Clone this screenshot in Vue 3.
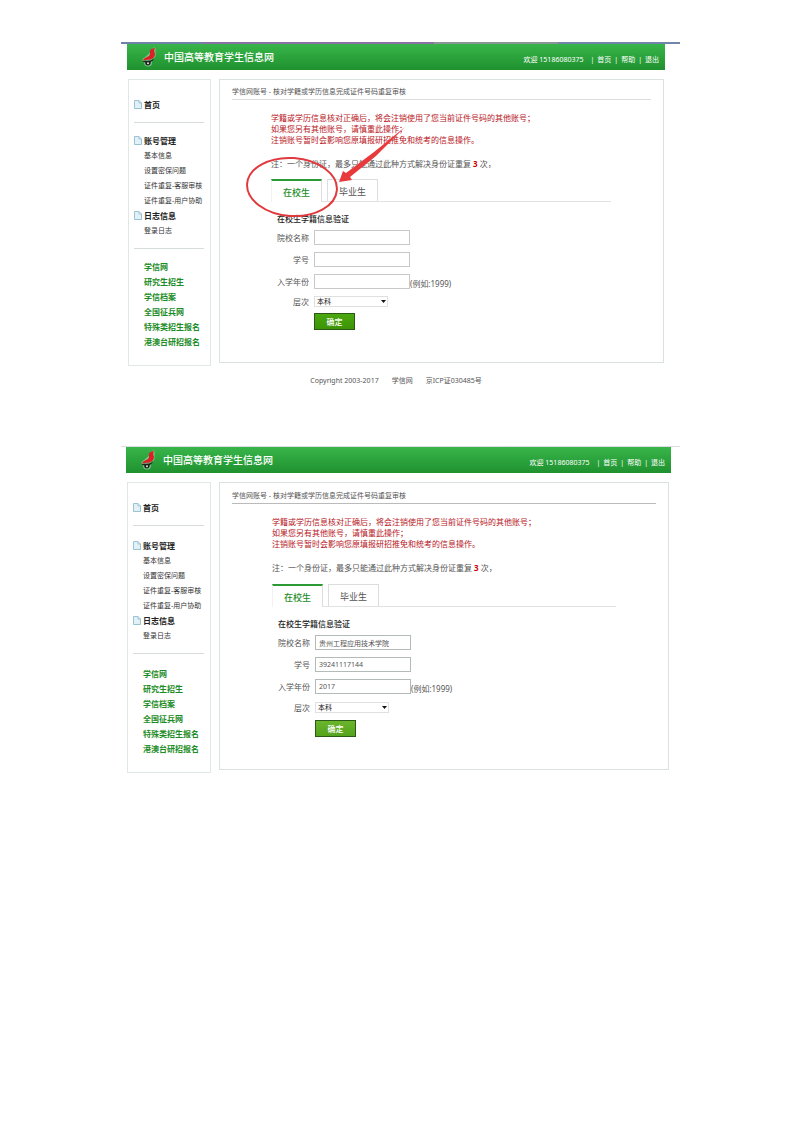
<script setup>
import { ref } from 'vue';

const accountItems = ['基本信息', '设置密保问题', '证件重复-客服审核', '证件重复-用户协助'];
const siteLinks = ['学信网', '研究生招生', '学信档案', '全国征兵网', '特殊类招生报名', '港澳台研招报名'];
const tabs = ['在校生', '毕业生'];
const levels = ['本科', '专科', '硕士', '博士'];

const screens = ref([
  {
    id: 'empty',
    tab: '在校生',
    school: '',
    number: '',
    year: '',
    level: '本科',
    marked: true,
    footer: true,
  },
  {
    id: 'filled',
    tab: '在校生',
    school: '贵州工程应用技术学院',
    number: '39241117144',
    year: '2017',
    level: '本科',
    marked: false,
    footer: false,
  },
]);
</script>

<template>
  <main class="page" lang="zh-CN">
    <section v-for="screen in screens" :key="screen.id" class="screen" :class="screen.id">
      <header class="top-bar">
        <svg class="logo" viewBox="0 0 16 20" aria-hidden="true">
          <g class="logo-glow">
            <path d="M13 2 L13 9 L9 12 L3 13 L9 8 Z" />
            <circle cx="7" cy="15.500" r="2.500" />
          </g>
          <path class="logo-red" d="M14 1 C10.500 1.500 8.500 3 9 5.500 C9.300 7.500 8.500 9 6 10 C4 10.800 2.500 12 1.500 14 C4 12.800 6 13 8 12.800 C12 12.300 14.500 9.500 13.800 6.500 C13.400 4.500 12.800 3 14 1 Z" />
          <path class="logo-black" d="M1.500 14.500 C5 13.200 9 14.500 13 11.800 C12 14 10.500 14.300 9.800 15 C9.800 17.500 8.500 18.500 6.800 18.500 C5 18.500 4 17.500 4.300 15.500 Z" />
          <circle class="logo-dot" cx="7" cy="16.300" r="1" />
        </svg>
        <h1>中国高等教育学生信息网</h1>
        <nav class="user-nav">
          <span class="welcome">欢迎 15186080375</span>
          <span>|</span><a href="#">首页</a>
          <span>|</span><a href="#">帮助</a>
          <span>|</span><a href="#">退出</a>
        </nav>
      </header>

      <div class="columns">
        <aside class="sidebar">
          <a href="#" class="menu-title">
            <svg class="doc" viewBox="0 0 8 9" aria-hidden="true"><path d="M.5.5h4.500l2.500 2.500v5.500h-7zM5 .5v2.500h2.500" /></svg>
            首页
          </a>
          <hr>
          <a href="#" class="menu-title">
            <svg class="doc" viewBox="0 0 8 9" aria-hidden="true"><path d="M.5.5h4.500l2.500 2.500v5.500h-7zM5 .5v2.500h2.500" /></svg>
            账号管理
          </a>
          <a v-for="item in accountItems" :key="item" href="#" class="menu-item">{{ item }}</a>
          <a href="#" class="menu-title">
            <svg class="doc" viewBox="0 0 8 9" aria-hidden="true"><path d="M.5.5h4.500l2.500 2.500v5.500h-7zM5 .5v2.500h2.500" /></svg>
            日志信息
          </a>
          <a href="#" class="menu-item">登录日志</a>
          <hr>
          <a v-for="link in siteLinks" :key="link" href="#" class="site-link">{{ link }}</a>
        </aside>

        <article class="content">
          <p class="breadcrumb">学信网账号 - 核对学籍或学历信息完成证件号码重复审核</p>
          <div class="verify">
            <p class="warning">
              学籍或学历信息核对正确后，将会注销使用了您当前证件号码的其他账号；<br>
              如果您另有其他账号，请慎重此操作；<br>
              注销账号暂时会影响您原填报研招推免和统考的信息操作。
            </p>
            <p class="note">注：一个身份证，最多只能通过此种方式解决身份证重复 <strong>3</strong> 次，</p>

            <div class="tabs">
              <button
                v-for="tab in tabs"
                :key="tab"
                type="button"
                class="tab"
                :class="{ active: screen.tab === tab }"
                @click="screen.tab = tab"
              >{{ tab }}</button>
            </div>

            <form class="form" @submit.prevent>
              <h2>{{ screen.tab }}学籍信息验证</h2>
              <div class="row">
                <label :for="screen.id + '-school'">院校名称</label>
                <input :id="screen.id + '-school'" v-model="screen.school" type="text">
              </div>
              <div class="row">
                <label :for="screen.id + '-number'">学号</label>
                <input :id="screen.id + '-number'" v-model="screen.number" type="text">
              </div>
              <div class="row">
                <label :for="screen.id + '-year'">入学年份</label>
                <input :id="screen.id + '-year'" v-model="screen.year" type="text">
                <span class="hint">(例如:1999)</span>
              </div>
              <div class="row level-row">
                <label :for="screen.id + '-level'">层次</label>
                <div class="select">
                  <select :id="screen.id + '-level'" v-model="screen.level">
                    <option v-for="level in levels" :key="level">{{ level }}</option>
                  </select>
                  <svg viewBox="0 0 5 3" aria-hidden="true"><path d="M0 0h5l-2.500 3z" /></svg>
                </div>
              </div>
              <button type="submit" class="submit">确定</button>
            </form>
          </div>

          <svg v-if="screen.marked" class="mark" viewBox="0 0 200 150" aria-hidden="true">
            <ellipse cx="72" cy="107" rx="45" ry="29" transform="rotate(4 72 107)" />
            <path d="M185 47 L156 76 L130 97 L132 100 L119 102 L123 91 L126 93 L154 72 Z" />
          </svg>
        </article>
      </div>

      <footer v-if="screen.footer" class="footer">
        <span>Copyright 2003-2017</span>
        <a href="#">学信网</a>
        <span>京ICP证030485号</span>
      </footer>
    </section>
  </main>
</template>

<style>
body {
  margin: 0;
  background: #fff;
}
</style>

<style scoped>
* {
  box-sizing: border-box;
}

.page {
  padding: 42px 120px 0 121px;
  font-family: "Noto Sans", "Noto Sans CJK SC", sans-serif;
  font-size: 8px;
  line-height: 11px;
  color: #555;
}

p,
h1,
h2 {
  margin: 0;
}

a {
  color: inherit;
  text-decoration: none;
}

button,
input,
select {
  margin: 0;
  font-family: inherit;
  color: inherit;
}

.screen.empty {
  padding: 0 15px 60px 6px;
  border-top: 2px solid;
  border-image: linear-gradient(90deg, #6f83a8 0 15%, #8b72a5 15% 56%, #8a9694 56% 78%, #7185a8 78%) 2;
}

.screen.filled {
  padding: 0 9px 0 5px;
  border-top: 1px solid #ddd;
}

.top-bar {
  display: flex;
  align-items: center;
  height: 26px;
  padding: 0 6px 0 14px;
  color: #fff;
  background: linear-gradient(#38b54a, #1f912f);
}

.logo {
  width: 16px;
  height: 20px;
  margin-right: 7px;
}

.logo-glow {
  fill: #b9e0bd;
  stroke: #b9e0bd;
  stroke-width: 3;
  stroke-linejoin: round;
  opacity: 0.6;
}

.logo-red {
  fill: #dc1f26;
}

.logo-black {
  fill: #1d2420;
}

.logo-dot {
  fill: #d5ead6;
}

h1 {
  flex: 1;
  font-size: 10px;
  font-weight: 500;
  line-height: 14px;
}

.user-nav {
  display: flex;
  gap: 3px;
  padding-top: 4px;
  font-size: 7px;
}

.welcome {
  margin-right: 4px;
}

.columns {
  display: flex;
  align-items: flex-start;
  gap: 8px;
  padding: 9px 1px 0;
}

.filled .columns {
  padding-right: 2px;
}

.sidebar {
  display: flex;
  flex: 0 0 83px;
  flex-direction: column;
  padding: 17px 6px 16px 5px;
  line-height: 15px;
  border: 1px solid #dfe8e6;
}

.filled .sidebar {
  flex-basis: 84px;
}

.sidebar hr {
  width: 100%;
  height: 1px;
  margin: 10px 0;
  border: 0;
  background: #d5dcdb;
}

.filled .sidebar hr {
  margin-bottom: 12px;
}

.menu-title {
  display: flex;
  align-items: center;
  gap: 2px;
  font-weight: 700;
  color: #222;
}

.doc {
  width: 8px;
  height: 9px;
  fill: #e1f1f7;
  stroke: #9cc3d3;
}

.menu-item {
  padding-left: 10px;
  font-size: 7px;
  color: #333;
  white-space: nowrap;
}

.site-link {
  padding-left: 10px;
  font-weight: 700;
  color: #1c8c26;
  white-space: nowrap;
}

.content {
  position: relative;
  flex: 1;
  min-width: 0;
  padding: 6px 12px 32px;
  border: 1px solid #d9e2e0;
}

.filled .content {
  padding-top: 7px;
}

.breadcrumb {
  padding-bottom: 2px;
  font-size: 7px;
  border-bottom: 1px solid #dcdcdc;
}

.filled .breadcrumb {
  border-color: #bbb;
}

.verify {
  margin: 12px 40px 0 39px;
}

.filled .verify {
  margin-left: 40px;
}

.warning {
  color: #b8141c;
  white-space: nowrap;
}

.note {
  margin-top: 13px;
  white-space: nowrap;
}

.note strong {
  color: #c00;
}

.tabs {
  display: flex;
  gap: 5px;
  margin-top: 10px;
  border-bottom: 1px solid #e2e2e2;
}

.filled .tabs {
  margin-top: 11px;
}

.tab {
  width: 51px;
  height: 22px;
  padding: 2px 0 0;
  font-size: 9px;
  line-height: 14px;
  background: #fff;
  border: 1px solid #ddd;
  border-bottom: 0;
  cursor: pointer;
}

.tab.active {
  height: 23px;
  margin-bottom: -1px;
  font-weight: 500;
  color: #1c8c26;
  border-top: 2px solid #2b9a35;
  border-left-color: #f2f2f2;
}

.form {
  display: flex;
  flex-direction: column;
  gap: 7px;
  padding: 11px 0 0 6px;
}

h2 {
  margin-bottom: -1px;
  font-size: 8px;
  font-weight: 500;
  line-height: 11px;
  color: #222;
}

.row {
  display: flex;
  align-items: center;
  height: 15px;
}

.row label {
  width: 32px;
  margin-right: 5px;
  text-align: right;
  white-space: nowrap;
}

.row input {
  width: 96px;
  height: 15px;
  padding: 0 3px;
  font-size: 7px;
  background: #fff;
  border: 1px solid #c8c8c8;
  outline: none;
}

.filled .row input {
  border-color: #b4bab7;
}

.hint {
  align-self: flex-end;
}

.row.level-row {
  height: 10px;
}

.filled .row.level-row {
  height: 12px;
}

.select {
  display: grid;
  align-items: center;
  width: 74px;
}

.select select,
.select svg {
  grid-area: 1 / 1;
}

.select select {
  width: 100%;
  height: 11px;
  padding: 0 2px;
  font-size: 7px;
  line-height: 9px;
  color: #111;
  background: #fff;
  border: 1px solid #e0e0e0;
  border-radius: 0;
  appearance: none;
}

.select svg {
  justify-self: end;
  width: 5px;
  height: 3px;
  margin-right: 2px;
  fill: #111;
  pointer-events: none;
}

.submit {
  width: 41px;
  height: 17px;
  margin-left: 37px;
  padding: 0;
  font-size: 8px;
  font-weight: 500;
  line-height: 13px;
  color: #fff;
  background: linear-gradient(#4aa80f, #3d9406);
  border: 1px solid #2b5a17;
  cursor: pointer;
}

.filled .submit {
  background: linear-gradient(#6ab52c, #55a31c);
}

.mark {
  position: absolute;
  top: 0;
  left: 0;
  width: 200px;
  height: 150px;
  fill: #e8393c;
  pointer-events: none;
}

.mark ellipse {
  fill: none;
  stroke: #e03a3e;
  stroke-width: 2;
}

.footer {
  display: flex;
  justify-content: center;
  gap: 13px;
  padding-top: 9px;
  font-size: 7px;
}
</style>
